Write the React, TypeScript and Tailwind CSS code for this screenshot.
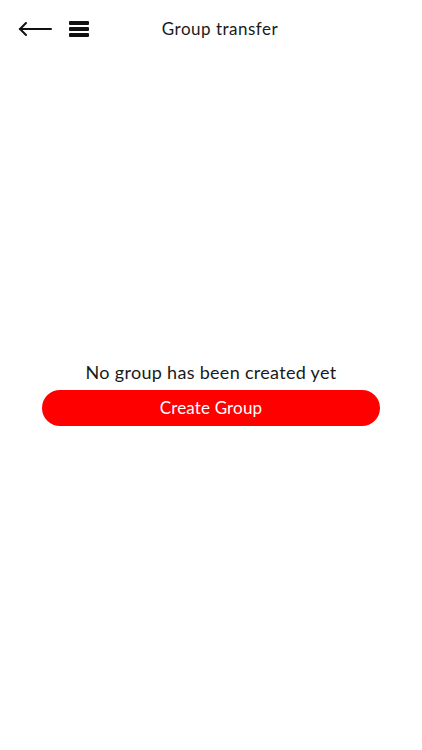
export default function App() {
  return (
    <div className="flex h-[750px] w-full flex-col bg-white font-['Lato',sans-serif] text-[#1a1a1a]">
      <header className="relative flex h-[58px] items-center">
        <div className="flex items-center gap-[17px] pl-[18px]">
          <svg width="34" height="16" viewBox="0 0 34 16" fill="none" stroke="#111" strokeWidth="2" strokeLinecap="round">
            <path d="M33 8H2" />
            <path d="M8 2L2 8l6 6" />
          </svg>
          <svg width="20" height="16" viewBox="0 0 20 16" fill="#111">
            <rect x="0" y="0" width="20" height="4" rx="1" />
            <rect x="0" y="6" width="20" height="4" rx="1" />
            <rect x="0" y="12" width="20" height="4" rx="1" />
          </svg>
        </div>
        <h1 className="absolute left-1/2 -translate-x-1/2 pl-[18px] text-[17px] font-normal tracking-[0.5px]">Group transfer</h1>
      </header>
      <main className="flex flex-col items-center pt-[303px]">
        <p className="text-[18px] leading-[22px] tracking-[0.3px]">No group has been created yet</p>
        <button
          type="button"
          className="mt-[7px] h-[36px] w-[338px] rounded-full bg-[#ff0000] text-[17px] tracking-[0.15px] text-white"
        >
          Create Group
        </button>
      </main>
    </div>
  );
}
